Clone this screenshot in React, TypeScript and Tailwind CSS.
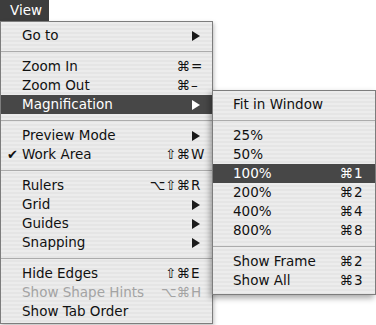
import React from "react";

type Item =
  | { sep: true }
  | {
      sep?: false;
      label: string;
      mods?: string;
      k?: string;
      sub?: boolean;
      active?: boolean;
      disabled?: boolean;
      checked?: boolean;
    };

const mainItems: Item[] = [
  { label: "Go to", sub: true },
  { sep: true },
  { label: "Zoom In", mods: "⌘", k: "=" },
  { label: "Zoom Out", mods: "⌘", k: "–" },
  { label: "Magnification", sub: true, active: true },
  { sep: true },
  { label: "Preview Mode", sub: true },
  { label: "Work Area", mods: "⇧⌘", k: "W", checked: true },
  { sep: true },
  { label: "Rulers", mods: "⌥⇧⌘", k: "R" },
  { label: "Grid", sub: true },
  { label: "Guides", sub: true },
  { label: "Snapping", sub: true },
  { sep: true },
  { label: "Hide Edges", mods: "⇧⌘", k: "E" },
  { label: "Show Shape Hints", mods: "⌥⌘", k: "H", disabled: true },
  { label: "Show Tab Order" },
];

const subItems: Item[] = [
  { label: "Fit in Window" },
  { sep: true },
  { label: "25%" },
  { label: "50%" },
  { label: "100%", mods: "⌘", k: "1", active: true },
  { label: "200%", mods: "⌘", k: "2" },
  { label: "400%", mods: "⌘", k: "4" },
  { label: "800%", mods: "⌘", k: "8" },
  { sep: true },
  { label: "Show Frame", mods: "⌘", k: "2" },
  { label: "Show All", mods: "⌘", k: "3" },
];

// aqua pinstripes
const stripes =
  "bg-[repeating-linear-gradient(to_bottom,#ececec_0px,#ececec_2px,#e5e5e5_2px,#e5e5e5_4px)]";

const Arrow = ({ light }: { light?: boolean }) => (
  <svg width="8" height="10" viewBox="0 0 8 10" className="mr-[1px]">
    <polygon points="0,0 8,5 0,10" fill={light ? "#ffffff" : "#1a1a1a"} />
  </svg>
);

const MenuRows = ({ items, indent }: { items: Item[]; indent: string }) => (
  <>
    {items.map((it, i) => {
      if (it.sep) {
        return (
          <div key={i} className="h-[12px] flex items-center">
            <div className="w-full h-px bg-[#acacac]" />
          </div>
        );
      }
      const color = it.active
        ? "text-white bg-[#474747]"
        : it.disabled
        ? "text-[#a3a3a3]"
        : "text-[#111]";
      return (
        <div
          key={i}
          className={`relative h-[19px] flex items-center justify-between ${indent} pr-[11px] ${color}`}
        >
          {it.checked && (
            <span className="absolute left-[6px] text-[13px] leading-none">✔</span>
          )}
          <span className="whitespace-nowrap">{it.label}</span>
          {it.sub && <Arrow light={it.active} />}
          {it.k && (
            <span className="flex whitespace-nowrap">
              <span className="text-right">{it.mods}</span>
              <span className="w-[11px] pl-[1px]">{it.k}</span>
            </span>
          )}
        </div>
      );
    })}
  </>
);

export default function App() {
  return (
    <div
      className="w-[376px] h-[325px] bg-white overflow-hidden text-[13.5px] leading-none"
      style={{ fontFamily: '"DejaVu Sans", Verdana, sans-serif' }}
    >
      <div className="h-[21px] w-[49px] bg-[#3d3d3d] text-white flex items-center pl-[10px]">
        View
      </div>
      <div className="relative">
        <div
          className={`w-[213px] h-[303px] border border-[#7d7d7d] pt-[4px] ${stripes} shadow-[1px_2px_4px_rgba(0,0,0,0.25)]`}
        >
          <MenuRows items={mainItems} indent="pl-[21px]" />
        </div>
        <div
          className={`absolute left-[212px] top-[69px] w-[164px] h-[205px] border border-[#7d7d7d] pt-[4px] ${stripes} shadow-[-2px_3px_6px_rgba(0,0,0,0.35)]`}
        >
          <MenuRows items={subItems} indent="pl-[20px]" />
        </div>
      </div>
    </div>
  );
}
